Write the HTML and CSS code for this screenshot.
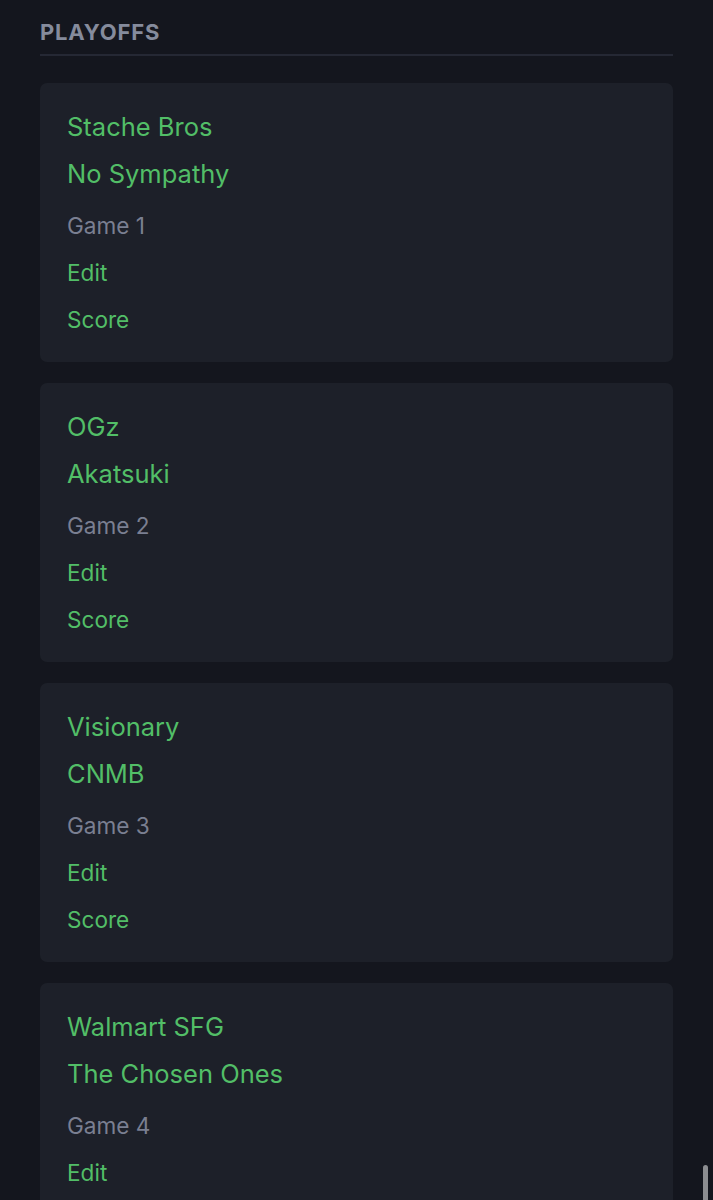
FILE: index.html
```html
<!DOCTYPE html>
<html lang="en">
<head>
<meta charset="utf-8">
<title>Playoffs</title>
<link rel="stylesheet" href="styles.css">
</head>
<body>
<div class="page">
  <section class="section">
    <h2 class="section-title">PLAYOFFS</h2>
    <div class="cards">
      <div class="card">
        <div class="team">Stache Bros</div>
        <div class="team">No Sympathy</div>
        <div class="game">Game 1</div>
        <a class="action">Edit</a>
        <a class="action">Score</a>
      </div>
      <div class="card">
        <div class="team">OGz</div>
        <div class="team">Akatsuki</div>
        <div class="game">Game 2</div>
        <a class="action">Edit</a>
        <a class="action">Score</a>
      </div>
      <div class="card">
        <div class="team">Visionary</div>
        <div class="team">CNMB</div>
        <div class="game">Game 3</div>
        <a class="action">Edit</a>
        <a class="action">Score</a>
      </div>
      <div class="card">
        <div class="team">Walmart SFG</div>
        <div class="team">The Chosen Ones</div>
        <div class="game">Game 4</div>
        <a class="action">Edit</a>
        <a class="action">Score</a>
      </div>
    </div>
  </section>
</div>
<div class="scrollbar"></div>
</body>
</html>
```

FILE: styles.css
```css
html, body {
  margin: 0;
  padding: 0;
  background: #14161e;
  height: 100%;
  overflow: hidden;
}
body {
  font-family: Inter, "Liberation Sans", Arial, sans-serif;
  color: #e5e7eb;
}
.page {
  padding: 0 40px;
}
.section-title {
  margin: 0;
  padding-top: 21px;
  padding-bottom: 11px;
  font-size: 22px;
  line-height: 22px;
  font-weight: 700;
  color: #858b9c;
  letter-spacing: 0.8px;
  border-bottom: 2px solid #252834;
}
.cards {
  display: flex;
  flex-direction: column;
  gap: 21px;
  padding-top: 27px;
}
.card {
  background: #1d2029;
  border-radius: 7px;
  padding: 20px 27px 18px;
  display: flex;
  flex-direction: column;
  height: 279px;
  box-sizing: border-box;
}
.team {
  font-size: 25.5px;
  line-height: 47px;
  color: #52be67;
}
.game {
  font-size: 22.6px;
  line-height: 47px;
  margin-top: 5px;
  color: #7a7f91;
}
.action {
  font-size: 22.6px;
  line-height: 47px;
  color: #52be67;
  text-decoration: none;
}
.scrollbar {
  position: fixed;
  right: 5px;
  bottom: 0;
  width: 5px;
  height: 35px;
  background: #8c8d91;
  border-radius: 3px 3px 0 0;
}
```
